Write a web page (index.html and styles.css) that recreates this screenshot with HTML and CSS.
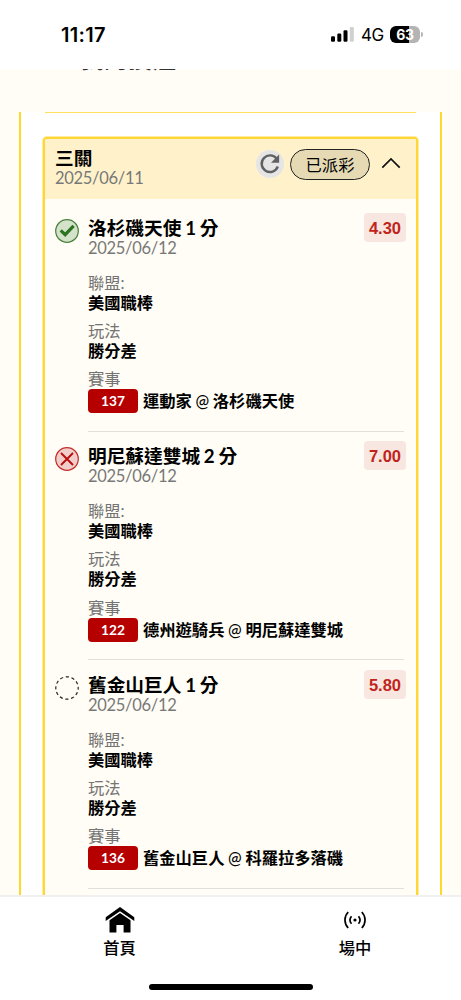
FILE: index.html
```html
<!DOCTYPE html>
<html lang="zh-Hant">
<head>
<meta charset="utf-8">
<title>我的投注</title>
<link rel="stylesheet" href="styles.css">
</head>
<body>
<div class="phone">
  <header class="status">
    <span class="clock">11:17</span>
    <div class="status-right">
      <svg class="signal" width="23" height="15" viewBox="0 0 23 15"><rect x="0" y="9.3" width="4" height="5.5" rx="1.2"/><rect x="6.3" y="6.5" width="4" height="8.3" rx="1.2"/><rect x="12.5" y="3.3" width="4" height="11.5" rx="1.2"/><rect x="18.8" y="0" width="4" height="14.8" rx="1.2" fill="#d0d0d0"/></svg>
      <span class="network">4G</span>
      <span class="battery">63</span><span class="battery-tip"></span>
    </div>
  </header>
  <div class="page-title"><h1>我的投注</h1></div>
  <main class="viewport">
    <div class="frame">
      <div class="previous"></div>
      <section class="card">
        <div class="card-head">
          <div class="card-name"><h2>三關</h2><time class="date">2025/06/11</time></div>
          <svg class="refresh" width="28" height="28" viewBox="0 0 28 28"><circle cx="14" cy="14" r="14" fill="#e5e5e5"/><path d="M21 9.2A8.3 8.3 0 1 0 21.8 16.5" fill="none" stroke="#616161" stroke-width="2.4"/><path d="M23.1 4.6V12.8H15z" fill="#616161"/></svg>
          <span class="paid">已派彩</span>
          <svg class="chevron" width="20" height="12" viewBox="0 0 20 12"><path d="M1.3 10.6 10 2l8.7 8.6" fill="none" stroke="#111" stroke-width="1.7"/></svg>
        </div>
        <article class="leg">
          <svg class="mark" width="24" height="24" viewBox="0 0 24 24"><circle cx="12" cy="12" r="11.3" fill="#d5e2ca" stroke="#47803b" stroke-width="1.2"/><path d="M5.700 11.300l4.500 4.400L18.600 6.800" fill="none" stroke="#2d7420" stroke-width="3.2"/></svg>
          <div class="leg-body">
            <div class="leg-top"><h3>洛杉磯天使 1 分</h3><span class="odds">4.30</span></div>
            <time class="date">2025/06/12</time>
            <dl><dt>聯盟:</dt><dd>美國職棒</dd><dt>玩法</dt><dd>勝分差</dd><dt>賽事</dt><dd class="match"><span class="number">137</span><span>運動家 <span class="at">@</span> 洛杉磯天使</span></dd></dl>
          </div>
        </article>
        <article class="leg">
          <svg class="mark" width="24" height="24" viewBox="0 0 24 24"><circle cx="12" cy="12" r="11.3" fill="#f2ceca" stroke="#c52b2b" stroke-width="1.2"/><path d="M6 6l12 12M18 6L6 18" fill="none" stroke="#b90d0d" stroke-width="1.9"/></svg>
          <div class="leg-body">
            <div class="leg-top"><h3>明尼蘇達雙城 2 分</h3><span class="odds">7.00</span></div>
            <time class="date">2025/06/12</time>
            <dl><dt>聯盟:</dt><dd>美國職棒</dd><dt>玩法</dt><dd>勝分差</dd><dt>賽事</dt><dd class="match"><span class="number">122</span><span>德州遊騎兵 <span class="at">@</span> 明尼蘇達雙城</span></dd></dl>
          </div>
        </article>
        <article class="leg">
          <svg class="mark" width="24" height="24" viewBox="0 0 24 24"><circle cx="12" cy="12" r="11.2" fill="none" stroke="#222" stroke-width="1.2" stroke-dasharray="3.2 2.664" stroke-dashoffset="1.6"/></svg>
          <div class="leg-body">
            <div class="leg-top"><h3>舊金山巨人 1 分</h3><span class="odds">5.80</span></div>
            <time class="date">2025/06/12</time>
            <dl><dt>聯盟:</dt><dd>美國職棒</dd><dt>玩法</dt><dd>勝分差</dd><dt>賽事</dt><dd class="match"><span class="number">136</span><span>舊金山巨人 <span class="at">@</span> 科羅拉多落磯</span></dd></dl>
          </div>
        </article>
      </section>
    </div>
  </main>
  <nav class="tabs">
    <div class="tab">
      <svg width="30" height="26" viewBox="0 0 30 26"><path d="M15 0 29.3 10.3V14L15 4.2.7 14v-3.700z"/><path d="M15 6 25.500 13.300V25.500H18.600V18H11.400V25.500H4.500V13.300z"/></svg>
      <span>首頁</span>
    </div>
    <div class="tab">
      <svg width="30" height="26" viewBox="0 0 30 26"><circle cx="15" cy="13" r="1.6"/><path d="M11.500 9.200a6 6 0 0 0 0 7.600M18.500 9.200a6 6 0 0 1 0 7.600M8.200 5a11.500 11.500 0 0 0 0 16M21.800 5a11.500 11.500 0 0 1 0 16" fill="none" stroke="#000" stroke-width="1.7"/></svg>
      <span>場中</span>
    </div>
  </nav>
  <div class="home-area"><div class="home-bar"></div></div>
</div>
</body>
</html>
```
FILE: styles.css
```css
* { box-sizing: border-box; }
body, h1, h2, h3, dl, dd { margin: 0; }
body { background: #fff; color: #000; font-family: Lato, "Noto Sans CJK TC", sans-serif; }
.phone { width: 461px; height: 1000px; overflow: hidden; display: flex; flex-direction: column; }
.status { height: 69px; flex: none; display: flex; justify-content: space-between; padding: 22px 38px 0 61px; font-family: Inter, sans-serif; }
.clock { font-size: 20px; font-weight: 600; line-height: 26px; letter-spacing: .3px; }
.status-right { display: flex; align-items: center; height: 25px; }
.signal { flex: none; }
.network { font-size: 17px; line-height: 26px; margin-left: 7px; width: 23px; letter-spacing: -.5px; }
.battery { width: 30px; height: 17px; border-radius: 6px; margin-left: 6px; background: linear-gradient(90deg, #000 63%, #b4b4b4 63%); color: #fff; font-size: 14px; font-weight: 700; line-height: 17px; text-align: center; letter-spacing: -.3px; }
.battery-tip { width: 2px; height: 5px; margin-left: 1px; border-radius: 0 2px 2px 0; background: #b4b4b4; }
.page-title { height: 43px; flex: none; background: #fffdf5; padding-left: 80px; overflow: hidden; }
.page-title h1 { font-size: 24px; line-height: 24px; font-weight: 500; margin-top: -22px; color: #333; }
.viewport { height: 783px; flex: none; overflow: hidden; padding: 0 19px; background: #fffdf5; }
.frame { border: solid #ffd82e; border-width: 0 2px; height: 100%; background: #fff; padding: 0 21px; overflow: hidden; }
.previous { height: 1px; margin: 0 3px 24px; background: #ffe05a; }
.card { height: 900px; margin: 0 1px; border: 2px solid #ffd636; border-radius: 4px; box-shadow: 0 0 0 1px #ffeca0; background: #fffdf5; overflow: hidden; }
.card-head { height: 60px; background: #fff2cb; display: flex; align-items: flex-start; padding: 11px 16px 0 10px; }
.card-name { flex: 1; display: flex; flex-direction: column; }
h2, h3 { font-size: 18.700px; font-weight: 700; line-height: 20px; white-space: nowrap; word-spacing: -.8px; }
.card-name h2 { margin-top: -2px; }
.date { display: block; font-size: 16.500px; line-height: 20px; color: #787878; letter-spacing: -.3px; }
.refresh { margin-right: -1px; }
.paid { width: 80px; height: 31px; margin: -1px 0 0 7px; border: 1.500px solid #222; border-radius: 16px; background: #e5dab4; text-align: center; font-size: 16.300px; line-height: 30px; }
.chevron { margin: 7px -1px 0 11px; }
.leg { display: flex; gap: 9px; padding: 14.700px 12px 0 10px; height: 228.600px; }
.card-head + .leg { padding-top: 18.700px; height: 232.600px; }
.mark { margin-top: 1px; flex: none; }
.leg-body { flex: 1; min-width: 0; border-bottom: 1px solid #e2e0da; }
.leg-top { display: flex; justify-content: space-between; height: 20px; }
.odds { width: 42px; height: 29px; margin: -5px -2px 0 0; border-radius: 4px; background: #f8e7e0; color: #c0241b; font: 700 16.500px/30px "Liberation Sans", Arial, sans-serif; text-align: center; }
dl { margin-top: 15px; font-size: 16.300px; line-height: 20px; }
dt { color: #747474; }
dd { font-weight: 700; margin-bottom: 8.200px; }
.match { display: flex; align-items: center; gap: 5px; height: 24px; margin: 0; white-space: nowrap; word-spacing: -.3px; }
.at { font-weight: 500; }
.number { width: 50px; height: 24px; border-radius: 4px; background: #b60000; color: #fff; font-size: 13.700px; line-height: 24px; text-align: center; }
.tabs { height: 78px; flex: none; border-top: 2px solid #f0f0f0; background: #fff; display: flex; }
.tab { flex: none; display: flex; flex-direction: column; align-items: center; padding-top: 10px; }
.tab:first-child { width: 239px; }
.tab:last-child { width: 232px; }
.tab svg { flex: none; }
.tab span { font-size: 16.300px; font-weight: 500; line-height: 20px; margin-top: 5px; }
.home-area { height: 27px; flex: none; display: flex; justify-content: center; padding-top: 11px; }
.home-bar { width: 164px; height: 6px; border-radius: 3px; background: #000; }
```
